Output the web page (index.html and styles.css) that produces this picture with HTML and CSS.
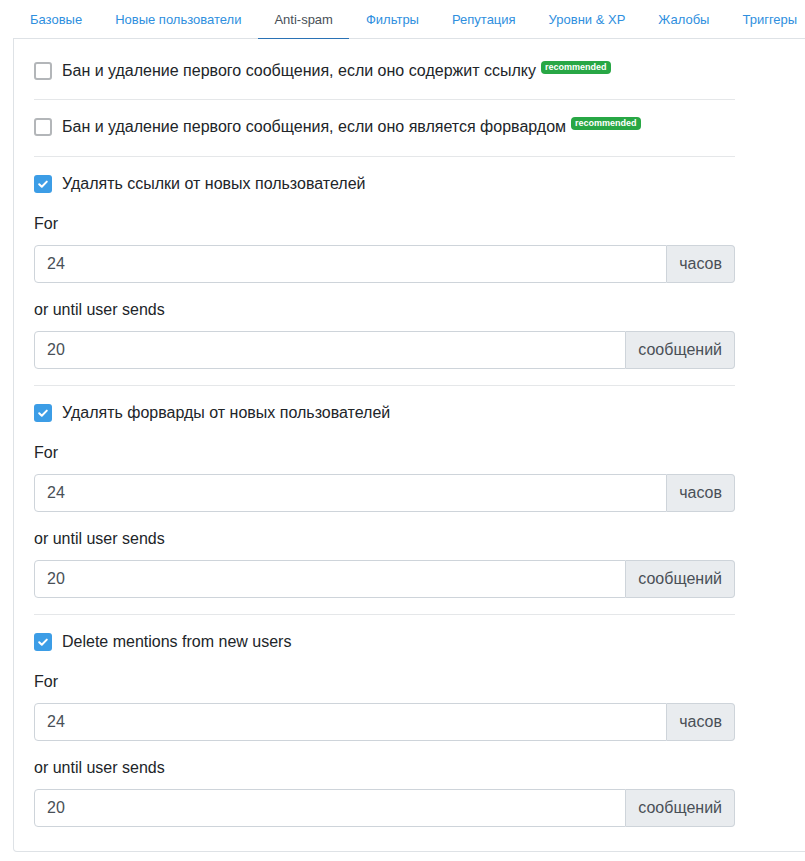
FILE: index.html
```html
<!DOCTYPE html>
<html lang="ru">
<head>
<meta charset="utf-8">
<title>Anti-spam</title>
<link rel="stylesheet" href="styles.css">
</head>
<body>
<div class="page">
  <nav class="tabs">
    <a class="tab">Базовые</a>
    <a class="tab">Новые пользователи</a>
    <a class="tab active">Anti-spam</a>
    <a class="tab">Фильтры</a>
    <a class="tab">Репутация</a>
    <a class="tab">Уровни &amp; XP</a>
    <a class="tab">Жалобы</a>
    <a class="tab">Триггеры</a>
  </nav>
  <div class="card">
    <div class="content">
      <label class="check-row">
        <span class="box"></span>
        <span class="check-text">Бан и удаление первого сообщения, если оно содержит ссылку<span class="badge">recommended</span></span>
      </label>
      <hr class="sep">
      <label class="check-row">
        <span class="box"></span>
        <span class="check-text">Бан и удаление первого сообщения, если оно является форвардом<span class="badge">recommended</span></span>
      </label>
      <hr class="sep sep-wide">

      <label class="check-row">
        <span class="box checked"><svg viewBox="0 0 18 18" width="18" height="18"><path d="M5.2 9.3 L7.8 11.8 L12.8 6.6" fill="none" stroke="#fff" stroke-width="2" stroke-linecap="round" stroke-linejoin="round"/></svg></span>
        <span class="check-text">Удалять ссылки от новых пользователей</span>
      </label>
      <div class="group">
        <div class="label">For</div>
        <div class="input-group"><div class="input">24</div><div class="addon">часов</div></div>
      </div>
      <div class="group">
        <div class="label">or until user sends</div>
        <div class="input-group"><div class="input">20</div><div class="addon">сообщений</div></div>
      </div>
      <hr class="sep">

      <label class="check-row">
        <span class="box checked"><svg viewBox="0 0 18 18" width="18" height="18"><path d="M5.2 9.3 L7.8 11.8 L12.8 6.6" fill="none" stroke="#fff" stroke-width="2" stroke-linecap="round" stroke-linejoin="round"/></svg></span>
        <span class="check-text">Удалять форварды от новых пользователей</span>
      </label>
      <div class="group">
        <div class="label">For</div>
        <div class="input-group"><div class="input">24</div><div class="addon">часов</div></div>
      </div>
      <div class="group">
        <div class="label">or until user sends</div>
        <div class="input-group"><div class="input">20</div><div class="addon">сообщений</div></div>
      </div>
      <hr class="sep">

      <label class="check-row">
        <span class="box checked"><svg viewBox="0 0 18 18" width="18" height="18"><path d="M5.2 9.3 L7.8 11.8 L12.8 6.6" fill="none" stroke="#fff" stroke-width="2" stroke-linecap="round" stroke-linejoin="round"/></svg></span>
        <span class="check-text">Delete mentions from new users</span>
      </label>
      <div class="group">
        <div class="label">For</div>
        <div class="input-group"><div class="input">24</div><div class="addon">часов</div></div>
      </div>
      <div class="group">
        <div class="label">or until user sends</div>
        <div class="input-group"><div class="input">20</div><div class="addon">сообщений</div></div>
      </div>
    </div>
  </div>
</div>
</body>
</html>
```

FILE: styles.css
```css
html, body {
  margin: 0;
  padding: 0;
  background: #fff;
}
body {
  font-family: "Liberation Sans", Arial, sans-serif;
  color: #212529;
  font-size: 16px;
  overflow: hidden;
}
.page {
  padding-left: 13px;
  overflow: hidden;
}
.tabs {
  display: flex;
  height: 38px;
  border-bottom: 1px solid #dee2e6;
  margin-right: -40px;
  white-space: nowrap;
}
.tab {
  display: flex;
  align-items: center;
  padding: 1px 16.5px 0 16.5px;
  font-size: 13px;
  color: #2f8fde;
  border-bottom: 1px solid transparent;
  margin-bottom: -1px;
}
.tab:first-child {
  padding-left: 17px;
}
.tab.active {
  color: #495057;
  border-bottom: 1px solid #2a72b5;
}
.card {
  border: 1px solid #dee2e6;
  border-top: none;
  border-radius: 0 0 4px 4px;
  margin-right: -40px;
  padding: 20px 20px 24px 20px;
}
.content {
  width: 701px;
}
.check-row {
  display: flex;
  align-items: center;
  height: 24px;
  line-height: 24px;
}
.box {
  width: 18px;
  height: 18px;
  box-sizing: border-box;
  border: 2px solid #b3b6b9;
  border-radius: 3px;
  margin-right: 10px;
  flex: none;
  display: flex;
}
.box.checked {
  background: #3c9de6;
  border: none;
}
.check-text {
  white-space: nowrap;
}
.badge {
  display: inline-block;
  vertical-align: top;
  margin-left: 5px;
  margin-top: 2px;
  background: #28a745;
  color: #fff;
  font-size: 9px;
  font-weight: bold;
  line-height: 13px;
  padding: 0 4px;
  border-radius: 4px;
}
.sep {
  border: none;
  border-top: 1px solid #e5e7e9;
  margin: 16px 0 15px 0;
  height: 0;
}
.sep-wide {
  margin-top: 17px;
}
.group {
  margin-top: 16px;
}
.group + .group {
  margin-top: 15px;
}
.label {
  line-height: 24px;
  margin-bottom: 9px;
}
.input-group {
  display: flex;
  height: 38px;
}
.input {
  flex: 1;
  box-sizing: border-box;
  border: 1px solid #ced4da;
  border-radius: 4px 0 0 4px;
  padding: 0 12px;
  line-height: 36px;
  color: #495057;
}
.addon {
  box-sizing: border-box;
  border: 1px solid #ced4da;
  border-left: none;
  border-radius: 0 4px 4px 0;
  background: #e9ecef;
  color: #495057;
  padding: 0 12px;
  line-height: 36px;
}
```
